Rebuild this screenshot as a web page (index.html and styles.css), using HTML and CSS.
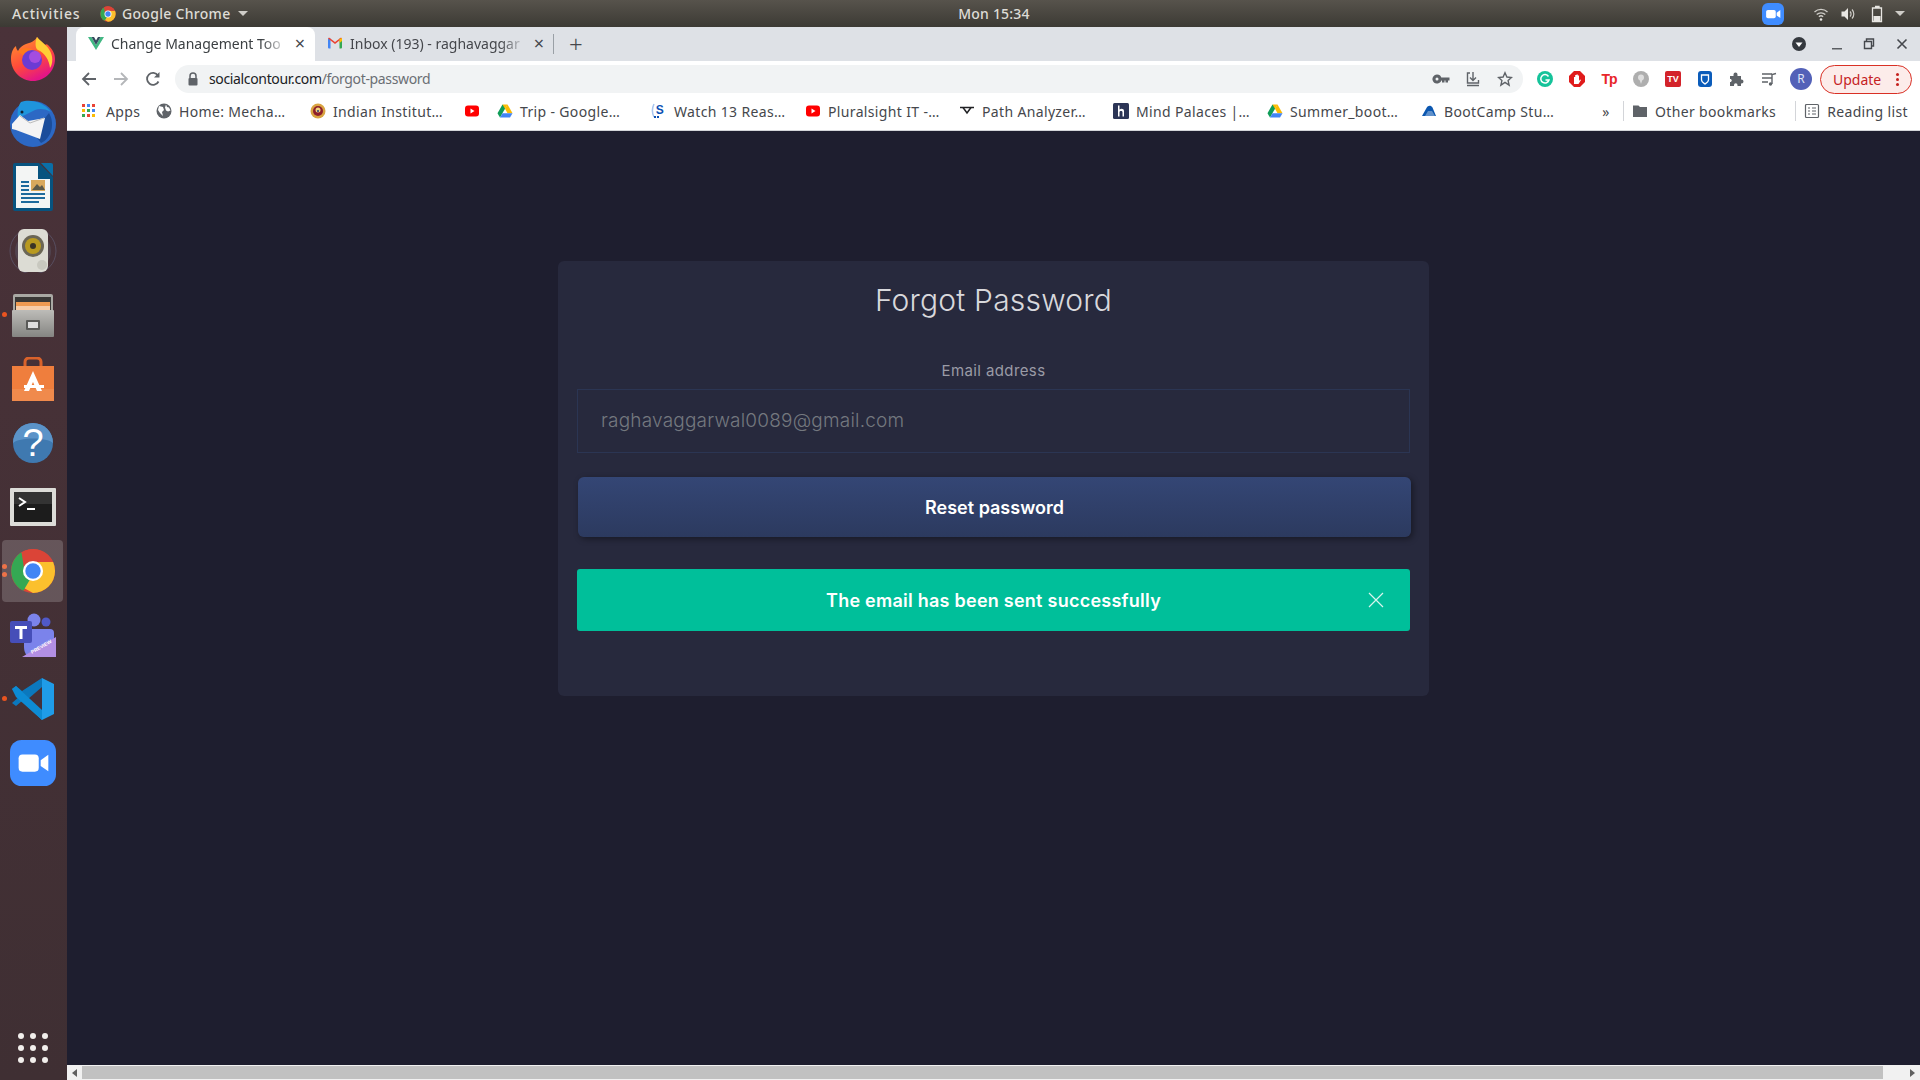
FILE: index.html
```html
<!DOCTYPE html>
<html>
<head>
<meta charset="utf-8">
<title>Change Management Tool</title>
<link rel="stylesheet" href="styles.css">
</head>
<body>

<svg class="defs" width="0" height="0">
	<symbol id="yt" viewBox="0 0 16 16"><rect x="1" y="2.5" width="14" height="11" rx="3" fill="#f00"/><path d="M6.5 5.5v5l4-2.500z" fill="#fff"/></symbol>
	<symbol id="drive" viewBox="0 0 16 16"><path d="M5.500 1.500h5l-2.500 4.500-2.500 0z" fill="#fbbc04"/><path d="M5.500 1.500l2.500 4.300-5 8.700-2.500-4.300z" fill="#0f9d58"/><path d="M10.500 1.500l5 8.700h-5l-2.500-4.400z" fill="#fbbc04"/><path d="M3 14.500l2.500-4.300h10l-2.500 4.300z" fill="#4285f4"/></symbol>
	<symbol id="chrome" viewBox="0 0 48 48"><circle cx="24" cy="24" r="23" fill="#db4437"/><path d="M24 24l-10 17.500 10 5.500a23 23 0 0 0 23-23 23 23 0 0 0-2-9.500H24z" fill="#fbc02d"/><path d="M24 24L12 4.500A23 23 0 0 0 12 43.500l2 1 10-17z" fill="#34a853"/><path d="M12 4.500A23 23 0 0 1 45 14.500H24l-4 1-5 8z" fill="#db4437"/><circle cx="24" cy="24" r="10.500" fill="#fff"/><circle cx="24" cy="24" r="8" fill="#4285f4"/></symbol>
	<symbol id="zoomcam" viewBox="0 0 48 48"><rect x="9" y="15" width="21" height="18" rx="4" fill="#fff"/><path d="M32 21l8-5.500v17l-8-5.500z" fill="#fff"/></symbol>
</svg>

<div class="topbar">
	<span class="top-activities">Activities</span>
	<span class="top-app">
		<svg width="16" height="16"><use href="#chrome"/></svg>
		Google Chrome
		<i class="caret"></i>
	</span>
	<span class="top-clock">Mon 15:34</span>
	<span class="top-tray">
		<span class="tray-zoom"><svg width="22" height="22"><use href="#zoomcam"/></svg></span>
		<svg class="tray-wifi" width="16" height="16" viewBox="0 0 16 16" fill="none" stroke="#cfcdc8" stroke-width="1.300"><path d="M1.500 6a9.500 9.500 0 0 1 13 0M3.700 8.500a6.300 6.300 0 0 1 8.600 0M5.900 10.800a3 3 0 0 1 4.200 0"/><circle cx="8" cy="13.500" r="1.300" fill="#e8e6e2" stroke="none"/></svg>
		<svg class="tray-vol" width="16" height="16" viewBox="0 0 16 16" fill="none" stroke="#cfcdc8" stroke-width="1.200"><path d="M1.500 5.500h3l3.500-3.500v12l-3.500-3.500h-3z" fill="#e8e6e2" stroke="none"/><path d="M10 5.500a3.500 3.500 0 0 1 0 5M12 3.500a6.500 6.500 0 0 1 0 9"/></svg>
		<svg class="tray-bat" width="14" height="18" viewBox="0 0 14 18" fill="none" stroke="#e8e6e2" stroke-width="1.300"><path d="M5 1.500h4v1.500M2.500 3h9v13.500h-9z"/><rect x="3.500" y="11" width="7" height="5" fill="#e8e6e2" stroke="none"/></svg>
		<i class="caret tray-caret"></i>
	</span>
</div>

<div class="desktop">
	<div class="dock">
		<div class="dock-item">
			<svg width="46" height="46" viewBox="0 0 46 46"><defs><linearGradient id="ffg" x1="0" y1="0" x2="0.500" y2="1"><stop offset="0" stop-color="#ff9a2e"/><stop offset="0.600" stop-color="#ff4b3a"/><stop offset="1" stop-color="#e31587"/></linearGradient></defs><path d="M27 1c3 4 5 6 8 8 1-1 2-1 3 0 4 4 7 8 7 14 0 12-10 22-22 22S1 35 1 23c0-6 2-11 5-13 0 2 1 4 2 5 2-4 5-6 8-7 4-1 9-3 11-7z" fill="url(#ffg)"/><path d="M27 1c3 4 10 8 13 14 3 5 3 13 0 17-1-8-5-15-12-18-3-1-3-9-1-13z" fill="#ffcf36"/><path d="M8 16c4-5 12-5 16-1-6 0-9 3-9 5z" fill="#ff7a1e"/><circle cx="22" cy="24" r="10" fill="#6b3bd4"/><circle cx="25" cy="21" r="6" fill="#a34de0"/></svg>
		</div>
		<div class="dock-item">
			<svg width="48" height="48" viewBox="0 0 48 48"><circle cx="24" cy="25" r="23" fill="#2c68c4"/><path d="M12 3c8-3 22-1 30 10-8-4-12-3-16-2l-10 5-7 3c-1-6 0-12 3-16z" fill="#1f95dc"/><path d="M40 14c6 10 3 25-8 30l-8-10z" fill="#1b4d9b"/><path d="M3 25l8-9 8 6 17-3-5 21-24-9-4-1z" fill="#f4f4f4"/><path d="M11 17l10 7 14-5" fill="none" stroke="#bbb" stroke-width="1"/><circle cx="13" cy="13" r="1.500" fill="#123"/></svg>
		</div>
		<div class="dock-item">
			<svg width="40" height="48" viewBox="0 0 40 48"><path d="M2 0h24l14 14v32a2 2 0 0 1-2 2H2a2 2 0 0 1-2-2V2a2 2 0 0 1 2-2z" fill="#07537f"/><path d="M3 3h22v13h12v29H3z" fill="#f3f5f4"/><path d="M28 0h10a2 2 0 0 1 2 2v11z" fill="#0a6fa8"/><path d="M8 18h8v2H8zM8 22h8v2H8zM8 26h8v2H8zM8 30h24v2H8zM8 34h24v2H8zM8 38h18v2H8z" fill="#1d6a9c"/><rect x="18" y="17" width="14" height="11" fill="#d9a95c"/><path d="M19 27l5-6 3 3 2-2 3 5z" fill="#5c5a4a"/></svg>
		</div>
		<div class="dock-item">
			<svg width="48" height="44" viewBox="0 0 48 44"><circle cx="24" cy="22" r="23" fill="none" stroke="#5e5a70" stroke-width="1" opacity=".7"/><circle cx="24" cy="22" r="18" fill="#5a5566" opacity=".5"/><rect x="9" y="0" width="30" height="43" rx="6" fill="#dcdcd4"/><circle cx="24" cy="17" r="11" fill="#6a6656"/><circle cx="24" cy="17" r="8" fill="#b89a20"/><circle cx="24" cy="17" r="3" fill="#3a3526"/><circle cx="33" cy="36" r="5" fill="#c8c8bf"/></svg>
		</div>
		<div class="dock-item dock-running">
			<svg width="42" height="43" viewBox="0 0 42 43"><defs><linearGradient id="fileg" x1="0" y1="0" x2="0" y2="1"><stop offset="0" stop-color="#bdbcb8"/><stop offset="1" stop-color="#858582"/></linearGradient></defs><rect x="1" y="0" width="40" height="43" rx="2" fill="#a9a8a3"/><rect x="3" y="3" width="36" height="13" fill="#3a3836"/><rect x="4" y="8" width="34" height="8" fill="#ee9a52"/><rect x="4" y="12" width="34" height="4" fill="#fff" opacity=".5"/><rect x="0" y="16" width="42" height="27" rx="1" fill="url(#fileg)"/><rect x="14" y="26" width="14" height="10" rx="1" fill="#5a5a58"/><rect x="16" y="28" width="10" height="6" fill="#ddd"/></svg>
		</div>
		<div class="dock-item">
			<svg width="42" height="44" viewBox="0 0 42 44"><path d="M13 10V5a4 4 0 0 1 4-4h8a4 4 0 0 1 4 4v5" fill="none" stroke="#d9622b" stroke-width="3"/><path d="M0 9h42v35H0z" fill="#ef7e3d"/><path d="M0 32h42v12H0z" fill="#f08a4c"/><path d="M21 14l-9 20h5l4-9 4 9h5z" fill="#fff"/><path d="M12 28h20v3H12z" fill="#fff"/></svg>
		</div>
		<div class="dock-item">
			<svg width="40" height="40" viewBox="0 0 40 40"><circle cx="20" cy="20" r="20" fill="#3f79b0"/><path d="M0 20a20 20 0 0 1 40 0c-6-6-34-6-40 0z" fill="#5b93c8"/><text class="help-mark" x="20" y="33" text-anchor="middle">?</text></svg>
		</div>
		<div class="dock-item">
			<svg width="46" height="38" viewBox="0 0 46 38"><rect width="46" height="38" rx="1" fill="#dcdcd8"/><rect x="4" y="4" width="38" height="30" fill="#1c1c1c"/><rect x="4" y="4" width="38" height="12" fill="#333"/><path d="M9 10l6 4-6 4" fill="none" stroke="#fff" stroke-width="2"/><path d="M17 20h8v2h-8z" fill="#fff"/></svg>
		</div>
		<div class="dock-item dock-active dock-running-two">
			<svg width="46" height="46"><use href="#chrome"/></svg>
		</div>
		<div class="dock-item">
			<svg width="46" height="44" viewBox="0 0 46 44"><circle cx="24" cy="7" r="6.500" fill="#7b83eb"/><circle cx="36" cy="9" r="4.500" fill="#5059c9"/><path d="M14 16h26a4 4 0 0 1 4 4v14a12 12 0 0 1-30 0z" fill="#7b83eb"/><rect x="0" y="8" width="22" height="22" rx="2" fill="#464eb8"/><path d="M5 13h12v3h-4.500v10h-3V16H5z" fill="#fff"/><path d="M12 44l34-20v20z" fill="#b28fe3"/><text class="teams-preview" x="22" y="41" transform="rotate(-30 22 41)">PREVIEW</text></svg>
		</div>
		<div class="dock-item dock-running">
			<svg width="42" height="42" viewBox="0 0 42 42"><path d="M30 0l12 6v30l-12 6-20-19 20-15z" fill="#1f9ce8"/><path d="M30 0v42L10 23l-6 5-4-3 8-7-8-7 4-3 6 5z" fill="#0b78bd"/><path d="M30 9L16 21l14 12z" fill="#453038"/><path d="M0 11l4-3 26 24v10L4 19z" fill="#0d8bd4"/></svg>
		</div>
		<div class="dock-item">
			<svg class="zoom-tile" width="46" height="46" viewBox="0 0 48 48"><rect width="48" height="48" rx="12" fill="#3f8cff"/><use href="#zoomcam"/></svg>
		</div>
		<div class="dock-apps">
			<i></i><i></i><i></i><i></i><i></i><i></i><i></i><i></i><i></i>
		</div>
	</div>

	<div class="browser">
		<div class="tabstrip">
			<div class="tab tab-active">
				<svg width="16" height="16" viewBox="0 0 16 16"><path d="M0 2h3.500L8 10l4.500-8H16L8 15z" fill="#41b883"/><path d="M3.500 2H6l2 3.500L10 2h2.500L8 10z" fill="#35495e"/></svg>
				<span class="tab-title">Change Management Too</span>
				<span class="tab-close">×</span>
			</div>
			<div class="tab">
				<svg width="16" height="16" viewBox="0 0 16 16"><path d="M1 3.500h2.500v10H2a1 1 0 0 1-1-1z" fill="#4285f4"/><path d="M15 3.500h-2.500v10H14a1 1 0 0 0 1-1z" fill="#34a853"/><path d="M1 3.500L8 9l7-5.500-1-1-6 4.500-6-4.500z" fill="#ea4335"/><path d="M12.500 4l2.500-1v3l-2.500 2z" fill="#fbbc04"/></svg>
				<span class="tab-title">Inbox (193) - raghavaggar</span>
				<span class="tab-close">×</span>
			</div>
			<i class="tab-sep"></i>
			<span class="tab-new">+</span>
			<span class="win-buttons">
				<svg class="win-search" width="16" height="16" viewBox="0 0 16 16"><circle cx="8" cy="8" r="7" fill="#35393f"/><path d="M4.500 6.500h7L8 11z" fill="#fff"/></svg>
				<svg class="win-min" width="12" height="12" viewBox="0 0 12 12"><path d="M1 10h10v1.500H1z" fill="#5b5e63"/></svg>
				<svg class="win-max" width="12" height="12" viewBox="0 0 12 12" fill="none" stroke="#45484d" stroke-width="1.400"><path d="M3.500 3V1h7v7h-2"/><path d="M1.500 3.500h7v7h-7z"/></svg>
				<svg class="win-close" width="12" height="12" viewBox="0 0 12 12" stroke="#45484d" stroke-width="1.600"><path d="M1.500 1.500l9 9M10.500 1.500l-9 9"/></svg>
			</span>
		</div>

		<div class="toolbar">
			<svg class="nav-back" width="16" height="16" viewBox="0 0 16 16" fill="none" stroke="#5f6368" stroke-width="1.800"><path d="M15 8H2M8 2L2 8l6 6"/></svg>
			<svg class="nav-fwd" width="16" height="16" viewBox="0 0 16 16" fill="none" stroke="#b4b6b9" stroke-width="1.800"><path d="M1 8h13M8 2l6 6-6 6"/></svg>
			<svg class="nav-reload" width="16" height="16" viewBox="0 0 16 16" fill="none" stroke="#5f6368" stroke-width="1.800"><path d="M13.500 10.500A6 6 0 1 1 13 4.500"/><path d="M14.500 1v5.500H9z" fill="#5f6368" stroke="none"/></svg>
			<div class="omnibox">
				<svg class="omni-lock" width="12" height="14" viewBox="0 0 12 14"><path d="M3 6V4a3 3 0 0 1 6 0v2" fill="none" stroke="#5f6368" stroke-width="1.500"/><rect x="1.500" y="6" width="9" height="7.500" rx="1" fill="#5f6368"/></svg>
				<span class="omni-url"><span class="omni-host">socialcontour.com</span>/forgot-password</span>
				<svg class="omni-key" width="18" height="12" viewBox="0 0 18 12" fill="#5f6368"><path d="M5 1.500a4.500 4.500 0 1 1-4.300 6 4.500 4.500 0 0 1 4.300-6zm0 3a1.500 1.500 0 1 0 0 3 1.500 1.500 0 0 0 0-3z"/><path d="M9 4.500h8.500v3H16v2h-2.500v-2h-1v2H10V7.500H9z"/></svg>
				<svg class="omni-save" width="16" height="16" viewBox="0 0 16 16" fill="none" stroke="#5f6368" stroke-width="1.400"><path d="M5 2H2.500v10h11V9M8 1v8M5 6.500L8 9.500l3-3M2 14.500h12"/></svg>
				<svg class="omni-star" width="16" height="16" viewBox="0 0 16 16" fill="none" stroke="#5f6368" stroke-width="1.400"><path d="M8 1.800l1.900 4.200 4.600.5-3.400 3.100 1 4.500L8 11.300l-4.100 2.800 1-4.500L1.500 6.500l4.600-.5z"/></svg>
			</div>
			<div class="extensions">
				<span class="ext"><svg width="16" height="16" viewBox="0 0 16 16"><circle cx="8" cy="8" r="8" fill="#15c39a"/><path d="M11.500 5.500A4.200 4.200 0 1 0 12 9H8.500" fill="none" stroke="#fff" stroke-width="1.500"/></svg></span>
				<span class="ext"><svg width="16" height="16" viewBox="0 0 16 16"><path d="M5 0h6l5 5v6l-5 5H5l-5-5V5z" fill="#e01b1b"/><path d="M5 13V6h1.200v3V4h1.300v4V3.500h1.300V8V4.500H10V10l1-1.500 1 .5-2.500 4z" fill="#fff"/></svg></span>
				<span class="ext"><span class="ext-tp">Tp</span></span>
				<span class="ext"><svg width="16" height="16" viewBox="0 0 16 16"><circle cx="8" cy="8" r="8" fill="#aeaeae"/><circle cx="8" cy="6.500" r="3" fill="#dedede"/><path d="M6.500 8.500h3L8 13z" fill="#dedede"/></svg></span>
				<span class="ext"><span class="ext-tv">TV</span></span>
				<span class="ext"><svg width="16" height="16" viewBox="0 0 16 16"><rect x="1" width="14" height="16" rx="3" fill="#0b5cba"/><path d="M4.500 4h7v5c0 2-2 3-3.500 4-1.500-1-3.500-2-3.500-4z" fill="none" stroke="#fff" stroke-width="1.300"/></svg></span>
				<span class="ext"><svg width="16" height="16" viewBox="0 0 16 16" fill="#5f6368"><path d="M1 5h3.500V3.500a2 2 0 0 1 4 0V5H12v3.500h.5a2 2 0 0 1 0 4H12V15H8.500v-1a1.700 1.700 0 0 0-3.500 0v1H1v-4h1a2 2 0 0 0 0-3H1z"/></svg></span>
				<span class="ext"><svg width="16" height="16" viewBox="0 0 16 16" fill="none" stroke="#5f6368" stroke-width="1.400"><path d="M1 3h10M1 7h10M1 11h6M11 13V3.500l4-1"/><circle cx="9.500" cy="13" r="1.700" fill="#5f6368" stroke="none"/></svg></span>
				<span class="ext"><span class="avatar">R</span></span>
			</div>
			<div class="update-pill">
				<span>Update</span>
				<i class="pill-dots"></i>
			</div>
		</div>

		<div class="bookmarks">
			<span class="bm bm-apps">
				<svg width="14" height="14" viewBox="0 0 14 14"><path d="M0 0h3v3H0z" fill="#ea4335"/><path d="M5 0h3v3H5z" fill="#4285f4"/><path d="M10 0h3v3h-3z" fill="#ea4335"/><path d="M0 5h3v3H0z" fill="#fbbc04"/><path d="M5 5h3v3H5z" fill="#34a853"/><path d="M10 5h3v3h-3z" fill="#4285f4"/><path d="M0 10h3v3H0z" fill="#34a853"/><path d="M5 10h3v3H5z" fill="#ea4335"/><path d="M10 10h3v3h-3z" fill="#fbbc04"/></svg>
				<span>Apps</span>
			</span>
			<span class="bm">
				<svg width="16" height="16" viewBox="0 0 16 16"><circle cx="8" cy="8" r="7.500" fill="#5f6368"/><path d="M3 3l4 1 1 3-2 2 1 4-3-3-2-3zM10 1.500l1 2.500 2 .5 1.500 3-2.500 1-2-1-1-3z" fill="#fff"/></svg>
				<span class="bm-text">Home: Mecha…</span>
			</span>
			<span class="bm">
				<svg width="16" height="16" viewBox="0 0 16 16"><circle cx="8" cy="8" r="7.500" fill="#d9a441"/><circle cx="8" cy="8" r="5" fill="#8d1f2c"/><circle cx="8" cy="7" r="2.500" fill="#f2d27a"/><circle cx="8" cy="8" r="1" fill="#243a7a"/></svg>
				<span class="bm-text">Indian Institut…</span>
			</span>
			<span class="bm bm-icon"><svg width="16" height="16"><use href="#yt"/></svg></span>
			<span class="bm">
				<svg width="16" height="16"><use href="#drive"/></svg>
				<span class="bm-text">Trip - Google…</span>
			</span>
			<span class="bm">
				<svg width="16" height="16" viewBox="0 0 16 16"><path d="M3 1C1 5 1 10 3 14" fill="none" stroke="#a8c5ee" stroke-width="1.500"/><text class="bm-s" x="9" y="11" text-anchor="middle">S</text><path d="M3 13h2v2H3zM6 13h2v2H6z" fill="#0b4fb3"/></svg>
				<span class="bm-text">Watch 13 Reas…</span>
			</span>
			<span class="bm">
				<svg width="16" height="16"><use href="#yt"/></svg>
				<span class="bm-text">Pluralsight IT -…</span>
			</span>
			<span class="bm">
				<svg width="16" height="16" viewBox="0 0 16 16" fill="none" stroke="#202124" stroke-width="1.500"><path d="M1 4.500h14"/><path d="M4 4.500L8 10l4-5.500"/></svg>
				<span class="bm-text">Path Analyzer…</span>
			</span>
			<span class="bm">
				<svg width="16" height="16" viewBox="0 0 16 16"><rect width="16" height="16" rx="1.500" fill="#2c3556"/><path d="M5 2.500h1.500v4c2-1.500 4.500-.7 4.500 1.500v5.500H9.500V9c0-1.500-3-1.500-3 0v4.500H5z" fill="#fff"/></svg>
				<span class="bm-text">Mind Palaces |…</span>
			</span>
			<span class="bm">
				<svg width="16" height="16"><use href="#drive"/></svg>
				<span class="bm-text">Summer_boot…</span>
			</span>
			<span class="bm">
				<svg width="16" height="16" viewBox="0 0 16 16"><path d="M1 13l4.500-8C7 2 10 2 11.500 4.500L15 13z" fill="#0b57b0"/><path d="M4 13l3-5h4l3 5z" fill="#fff" opacity=".35"/></svg>
				<span class="bm-text">BootCamp Stu…</span>
			</span>
			<span class="bm-more">»</span>
			<i class="bm-sep"></i>
			<span class="bm bm-tail">
				<svg width="16" height="16" viewBox="0 0 16 16" fill="#5f6368"><path d="M1 2.500h5.500L8 4h7v10H1z"/></svg>
				<span>Other bookmarks</span>
			</span>
			<i class="bm-sep bm-sep-two"></i>
			<span class="bm bm-tail">
				<svg width="16" height="16" viewBox="0 0 16 16" fill="none" stroke="#5f6368" stroke-width="1.200"><rect x="1.500" y="1.500" width="13" height="13" rx="1"/><path d="M4 5h2M8 5h4M4 8h2M8 8h4M4 11h2M8 11h4"/></svg>
				<span>Reading list</span>
			</span>
		</div>

		<div class="page">
			<div class="card">
				<h2 class="card-title">Forgot Password</h2>
				<label class="field-label">Email address</label>
				<div class="field-input">raghavaggarwal0089@gmail.com</div>
				<button class="btn-reset">Reset password</button>
				<div class="alert-ok">
					<span>The email has been sent successfully</span>
					<svg class="alert-close" width="16" height="16" viewBox="0 0 16 16" stroke="#d8f5ee" stroke-width="1.200"><path d="M1 1l14 14M15 1L1 15"/></svg>
				</div>
			</div>
		</div>

		<div class="hscroll">
			<i class="arrow-left"></i>
			<div class="hscroll-thumb"></div>
			<i class="arrow-right"></i>
		</div>
	</div>
</div>

</body>
</html>
```

FILE: styles.css
```css
* {margin:0; padding:0; box-sizing:border-box;}

html, body {width:1920px; height:1080px; overflow:hidden;}
body {display:flex; flex-direction:column; font-family:"Noto Sans", "Open Sans", sans-serif; background:#1e1e2f;}

.defs {position:absolute;}
svg {display:block; flex:none;}
i {display:block; font-style:normal;}

/* ubuntu top bar */
.topbar {height:27px; flex:none; display:flex; align-items:center; position:relative; background:linear-gradient(#57534c, #3c3a34); color:#dedcd6; font-size:14px; font-weight:500; letter-spacing:.2px;}
.top-activities {margin-left:12px; width:70px; letter-spacing:.8px;}
.top-app {display:flex; align-items:center; gap:6px; margin-left:18px; letter-spacing:.3px;}
.caret {width:0; height:0; border-left:5px solid transparent; border-right:5px solid transparent; border-top:5px solid #cfcdc8;}
.top-app .caret {margin-left:2px;}
.top-clock {position:absolute; left:958px; width:72px; text-align:center;}
.top-tray {margin-left:auto; display:flex; align-items:center; margin-right:15px;}
.tray-zoom {width:22px; height:22px; border-radius:6px; background:#3f8cff; display:block;}
.tray-wifi {margin-left:29px;}
.tray-vol {margin-left:11px;}
.tray-bat {margin-left:14px;}
.tray-caret {margin-left:11px;}

.desktop {flex:1; display:flex; min-height:0;}

/* launcher */
.dock {width:67px; flex:none; display:flex; flex-direction:column; padding-right:1px; background:linear-gradient(#4a3239, #3f2f33);}
.dock-item {height:64px; flex:none; display:flex; align-items:center; justify-content:center; position:relative;}
.dock-running::before, .dock-running-two::before {content:""; position:absolute; left:2px; top:29px; width:5px; height:5px; border-radius:50%; background:#e95420;}
.dock-running-two::before {top:25px; box-shadow:0 8px 0 #e95420;}
.dock-active::after {content:""; position:absolute; left:2px; right:3px; top:1px; bottom:1px; border-radius:4px; background:rgba(255,255,255,.18); z-index:0;}
.dock-active svg {position:relative; z-index:1;}
.help-mark {font-family:"Liberation Sans", sans-serif; font-size:38px; fill:#fff;}
.teams-preview {font-family:"Liberation Sans", sans-serif; font-size:5px; font-weight:700; fill:#fff;}
.dock-apps {margin-top:auto; margin-bottom:17px; margin-left:18px; width:32px; display:grid; grid-template-columns:repeat(3, 6px); gap:6px;}
.dock-apps i {width:6px; height:6px; border-radius:50%; background:#f2efec;}

.browser {flex:1; min-width:0; display:flex; flex-direction:column;}

/* tabs */
.tabstrip {height:34px; flex:none; display:flex; align-items:center; background:#dee1e6; font-size:14px; color:#45474c; padding-left:9px;}
.tab {width:239px; height:34px; display:flex; align-items:center; padding:0 10px 2px 12px; gap:7px;}
.tab-active {background:#fff; border-radius:8px 8px 0 0; color:#3c4043;}
.tab-title {flex:1; overflow:hidden; white-space:nowrap; -webkit-mask-image:linear-gradient(90deg, #000 85%, transparent); mask-image:linear-gradient(90deg, #000 85%, transparent);}
.tab-close {font-size:18px; line-height:18px; color:#45474c;}
.tab-sep {width:1px; height:20px; background:#9aa0a6; margin-left:-1px;}
.tab-new {font-size:24px; font-weight:300; margin-left:15px; line-height:24px; color:#45474c;}
.win-buttons {margin-left:auto; display:flex; align-items:center;}
.win-min {margin-left:24px;}
.win-max {margin-left:20px;}
.win-close {margin-left:21px; margin-right:12px;}

/* address row */
.toolbar {height:34px; flex:none; display:flex; align-items:center; background:#fff; padding-top:2px;}
.nav-back {margin-left:14px;}
.nav-fwd {margin-left:16px;}
.nav-reload {margin-left:16px;}
.omnibox {width:1348px; height:28px; margin-left:14px; display:flex; align-items:center; background:#f1f3f4; border-radius:14px; font-size:14px; color:#6b6f74;}
.omni-lock {margin-left:12px;}
.omni-url {margin-left:10px; margin-top:-2px; letter-spacing:-.35px;}
.omni-host {color:#202124;}
.omni-key {margin-left:auto;}
.omni-save {margin-left:15px;}
.omni-star {margin-left:16px; margin-right:10px;}
.extensions {display:flex; margin-left:6px;}
.ext {width:32px; height:24px; display:flex; align-items:center; justify-content:center;}
.ext-tp {font-family:"Liberation Sans", sans-serif; font-weight:700; font-size:14px; letter-spacing:-1px; color:#e8262a;}
.ext-tv {width:16px; height:16px; background:#d3232a; border-radius:2px; color:#fff; font-family:"Liberation Sans", sans-serif; font-weight:700; font-size:9px; line-height:16px; text-align:center;}
.avatar {width:22px; height:22px; border-radius:50%; background:#5361b8; color:#dfe3f5; font-size:12px; line-height:22px; text-align:center;}
.update-pill {width:92px; height:29px; margin-left:3px; display:flex; align-items:center; border:1px solid #d93025; border-radius:15px; background:#fcecea; color:#c5221f; font-size:14px; padding-left:12px;}
.pill-dots {width:3px; height:3px; border-radius:50%; background:#c5221f; box-shadow:0 -5px 0 #c5221f, 0 5px 0 #c5221f; margin-left:auto; margin-right:12px;}

/* bookmarks row */
.bookmarks {height:36px; flex:none; display:flex; align-items:center; background:#fff; border-bottom:1px solid #d3d5d9; font-size:14px; letter-spacing:.35px; color:#45474c; padding-left:7px; padding-bottom:3px;}
.bm {width:154px; flex:none; display:flex; align-items:center; gap:7px; padding:0 8px;}
.bm-apps {width:74px; gap:10px;}
.bm-icon {width:33px;}
.bm-tail {width:auto;}
.bm-text {flex:1; white-space:nowrap;}
.bm-s {font-family:"Liberation Sans", sans-serif; font-weight:700; font-size:12px; fill:#0b4fb3;}
.bm-more {margin-left:32px; width:14px; font-size:14px; text-align:center;}
.bm-sep {width:1px; height:20px; background:#d3d5d9; margin-left:10px;}
.bm-sep-two {margin-left:11px;}

/* page */
.page {flex:1; min-height:0; background:#1e1e2f; padding-top:130px;}
.card {width:871px; height:435px; margin:0 auto; padding:0 19px; background:#27293d; border-radius:6px; font-family:Inter, "Open Sans", sans-serif; text-align:center;}
.card-title {font-size:30px; font-weight:300; line-height:38px; padding-top:20px; height:58px; letter-spacing:.2px; color:#d8d8dc;}
.field-label {display:block; margin-top:42px; font-size:15px; line-height:20px; letter-spacing:.4px; color:#9a9ba6;}
.field-input {height:64px; margin-top:8px; padding-left:23px; border:1px solid #2b3553; font-size:19px; font-weight:300; line-height:62px; letter-spacing:.2px; text-align:left; color:#74787f;}
.btn-reset {display:block; width:833px; height:60px; margin-top:24px; margin-left:1px; border:0; border-radius:6px; background:linear-gradient(#344675, #2c3a5f); box-shadow:2px 2px 6px rgba(0,0,0,.4); font-family:Inter, sans-serif; font-size:18px; font-weight:600; color:#fff;}
.alert-ok {height:62px; margin-top:32px; position:relative; display:flex; align-items:center; justify-content:center; border-radius:3px; background:#00bf9a; font-size:18px; font-weight:600; letter-spacing:.25px; color:#fff;}
.alert-close {position:absolute; right:26px; top:23px;}

/* horizontal scrollbar */
.hscroll {height:15px; flex:none; display:flex; align-items:center; background:#f1f1f1;}
.hscroll-thumb {flex:1; height:13px; background:#c1c1c1;}
.arrow-left {width:0; height:0; margin:0 5px 0 5px; border-top:4px solid transparent; border-bottom:4px solid transparent; border-right:5px solid #606060;}
.arrow-right {width:0; height:0; margin:0 5px 0 27px; border-top:4px solid transparent; border-bottom:4px solid transparent; border-left:5px solid #606060;}
```
